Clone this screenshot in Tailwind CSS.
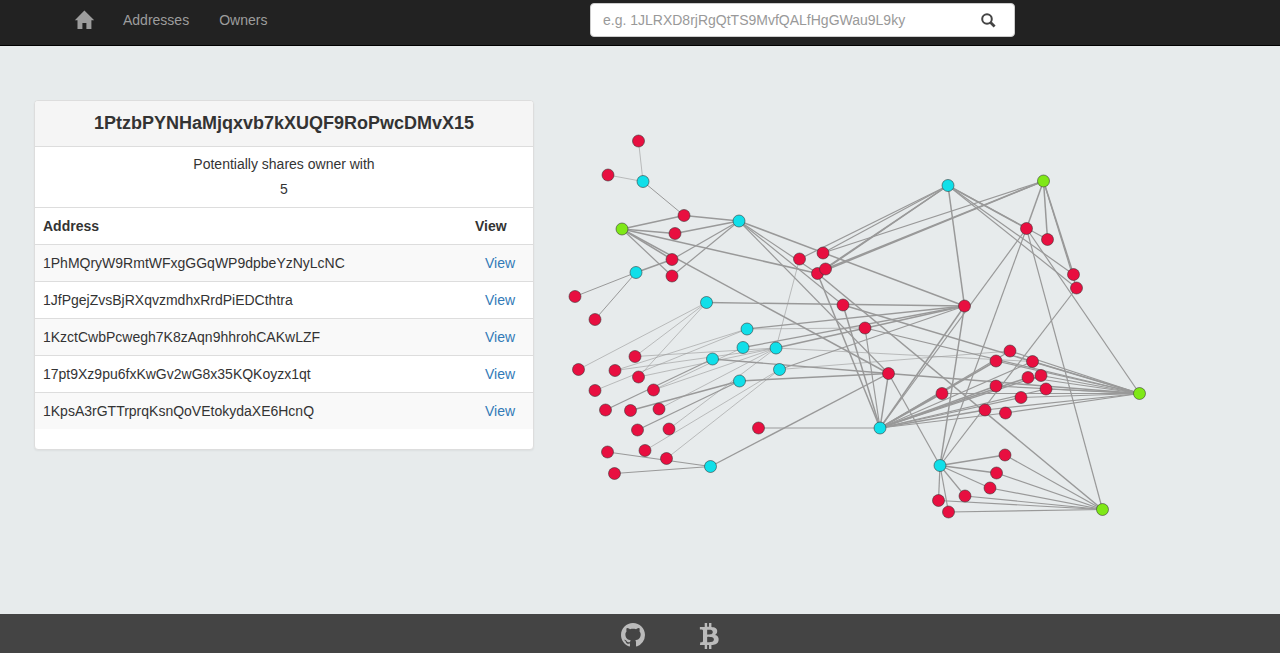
<!DOCTYPE html>
<html lang="en">
<head>
  <meta charset="UTF-8">
  <meta name="viewport" content="width=device-width, initial-scale=1">
  <title>Address overview</title>
  <script src="https://cdn.jsdelivr.net/npm/@tailwindcss/browser@4"></script>
</head>
<body class="min-h-screen flex flex-col bg-[#e7ebec] font-['Liberation_Sans',sans-serif] text-[14px] leading-[20px] text-[#333]">

  <!-- Navbar -->
  <nav class="flex bg-[#222] border-b border-black">
    <div class="w-[590px] shrink-0 flex items-start pl-[60px] h-[45px] text-[#9d9d9d]">
      <a href="#" aria-label="Home" class="px-[14px] py-[10px]">
        <svg class="w-[20px] h-[20px]" viewBox="0 0 20 20" fill="currentColor">
          <path d="M10.4 .6 L20.2 10.3 L17.4 10.3 L17.4 19 L12.4 19 L12.4 13 L8.4 13 L8.4 19 L3.5 19 L3.5 10.3 L.8 10.3 Z"/>
        </svg>
      </a>
      <a href="#" class="px-[15px] py-[10px]">Addresses</a>
      <a href="#" class="px-[15px] py-[10px]">Owners</a>
    </div>
    <form class="w-[425px] h-[34px] mt-[3px] flex items-center bg-white border border-[#ccc] rounded-[4px]">
      <input type="text" aria-label="Search address" placeholder="e.g. 1JLRXD8rjRgQtTS9MvfQALfHgGWau9L9ky" class="flex-1 min-w-0 h-full px-[12px] outline-none placeholder:text-[#999]">
      <button type="button" aria-label="Search" class="h-full px-[18px] text-[#444]">
        <svg class="w-[15px] h-[15px]" viewBox="0 0 15 15" fill="none" stroke="currentColor">
          <circle cx="6" cy="6" r="4.8" stroke-width="2"/>
          <path d="M9.6 9.6 L13.6 13.6" stroke-width="2.8"/>
        </svg>
      </button>
    </form>
  </nav>

  <main class="flex-1 flex items-start pt-[54px] pl-[34px] gap-[16px]">

    <!-- Address panel -->
    <section class="w-[500px] shrink-0 bg-white border border-[#ddd] rounded-[4px] shadow-xs overflow-hidden">
      <h1 class="h-[46px] bg-[#f5f5f5] border-b border-[#ddd] text-center text-[18px] leading-[44px] font-bold">1PtzbPYNHaMjqxvb7kXUQF9RoPwcDMvX15</h1>
      <div class="h-[60px] pt-[7px] text-center">
        <p>Potentially shares owner with</p>
        <p class="mt-[5px]">5</p>
      </div>
      <table class="w-full mb-[20px]">
        <thead>
          <tr class="border-t border-[#ddd]"><th class="p-[8px] text-left">Address</th><th class="w-[66px] p-[8px] text-left">View</th></tr>
        </thead>
        <tbody>
          <tr class="border-t border-[#ddd] bg-[#f9f9f9]"><td class="p-[8px]">1PhMQryW9RmtWFxgGGqWP9dpbeYzNyLcNC</td><td class="p-[8px] text-center"><a href="#" class="text-[#337ab7]">View</a></td></tr>
          <tr class="border-t border-[#ddd]"><td class="p-[8px]">1JfPgejZvsBjRXqvzmdhxRrdPiEDCthtra</td><td class="p-[8px] text-center"><a href="#" class="text-[#337ab7]">View</a></td></tr>
          <tr class="border-t border-[#ddd] bg-[#f9f9f9]"><td class="p-[8px]">1KzctCwbPcwegh7K8zAqn9hhrohCAKwLZF</td><td class="p-[8px] text-center"><a href="#" class="text-[#337ab7]">View</a></td></tr>
          <tr class="border-t border-[#ddd]"><td class="p-[8px]">17pt9Xz9pu6fxKwGv2wG8x35KQKoyzx1qt</td><td class="p-[8px] text-center"><a href="#" class="text-[#337ab7]">View</a></td></tr>
          <tr class="border-t border-[#ddd] bg-[#f9f9f9]"><td class="p-[8px]">1KpsA3rGTTrprqKsnQoVEtokydaXE6HcnQ</td><td class="p-[8px] text-center"><a href="#" class="text-[#337ab7]">View</a></td></tr>
        </tbody>
      </table>
    </section>

    <!-- Transaction graph -->
    <svg id="graph" class="flex-1 min-w-0" viewBox="550 100 730 450" role="img" aria-label="Transaction graph">
      <g id="links" stroke="#999"></g>
      <g id="nodes" stroke="#333" stroke-opacity="0.8" stroke-width="0.7"></g>
    </svg>
  </main>

  <!-- Footer -->
  <footer class="h-[39px] flex justify-center gap-[54px] pl-[60px] pt-[9px] bg-[#444] text-[#bbb]">
    <a href="#" aria-label="GitHub">
      <svg class="w-[24px] h-[24px]" viewBox="0 0 16 16" fill="currentColor">
        <path d="M8 0C3.58 0 0 3.58 0 8c0 3.54 2.29 6.53 5.47 7.59.4.07.55-.17.55-.38 0-.19-.01-.82-.01-1.49-2.01.37-2.53-.49-2.69-.94-.09-.23-.48-.94-.82-1.13-.28-.15-.68-.52-.01-.53.63-.01 1.08.58 1.23.82.72 1.21 1.87.87 2.33.66.07-.52.28-.87.51-1.07-1.78-.2-3.64-.89-3.64-3.95 0-.87.31-1.59.82-2.15-.08-.2-.36-1.02.08-2.12 0 0 .67-.21 2.2.82.64-.18 1.32-.27 2-.27.68 0 1.36.09 2 .27 1.53-1.04 2.2-.82 2.2-.82.44 1.1.16 1.92.08 2.12.51.56.82 1.27.82 2.15 0 3.07-1.87 3.75-3.65 3.95.29.25.54.73.54 1.48 0 1.07-.01 1.93-.01 2.2 0 .21.15.46.55.38A8.01 8.01 0 0 0 16 8c0-4.42-3.58-8-8-8z"/>
      </svg>
    </a>
    <a href="#" aria-label="Bitcoin">
      <svg class="w-[20px] h-[26px]" viewBox="0 128 1280 1664" fill="currentColor">
        <path d="M1167 640q18 182-131 258 117 28 175 103t45 214q-7 71-32.5 125t-64.5 89-97 58.5-121.5 34.5-145.5 15v255h-154v-251q-80 0-122-1v252h-154v-255q-18 0-54-.5t-55-.5h-200l31-183h111q50 0 58-51v-402h16q-6-1-16-1v-287q-13-68-89-68h-111v-164l212 1q64 0 97-1v-252h154v247q82-2 122-2v-245h154v252q79 7 140 22.5t113 45 82.5 78 36.5 114.5zm-215 545q0-36-15-64t-37-46-57.5-30.5-65.5-18.5-74-9-69-3-64.5 1-47.5 1v338q8 0 37 .5t48 .5 53-1.5 58.5-4 57-8.5 55.5-14 47.5-21 39.5-30 24.5-40 9.5-51zm-71-476q0-33-12.5-58.5t-30.5-42-48-28-55-16.5-61.5-8-58-2.5-54 1-39.5.5v307q5 0 34.5.5t46.5 0 50-2 55-5.5 51.5-11 48.5-18.5 37-27 27-38.5 9-51z"/>
      </svg>
    </a>
  </footer>

  <script>
    const colors = { r: "#e80f40", c: "#10dfe9", g: "#7fe817" };

    // id: [type, x, y]
    const nodes = {
      a: ["r", 638.5, 141], b: ["r", 608, 175], c: ["r", 684, 215.5], d: ["r", 675, 233.5],
      e: ["r", 672, 259.5], f: ["r", 672, 276], g: ["r", 575, 296.5], h: ["r", 595, 319.5],
      i: ["r", 635, 356.5], j: ["r", 615, 370.5], k: ["r", 638.5, 377], l: ["r", 578.5, 369.5],
      m: ["r", 595, 390.5], n: ["r", 653.5, 390], o: ["r", 605.5, 410], p: ["r", 630.5, 410.5],
      q: ["r", 659, 409], r: ["r", 637.5, 430], s: ["r", 669, 429], t: ["r", 645, 450.5],
      u: ["r", 607.5, 452], v: ["r", 666.5, 458.5], w: ["r", 614.5, 473.5], x: ["r", 758.5, 428],
      M1: ["r", 799.5, 259], M2: ["r", 823, 253], M3: ["r", 817.5, 273.5], M4: ["r", 825.5, 269],
      M5: ["r", 843, 305], M6: ["r", 865, 328], M7: ["r", 888.5, 373.5], M8: ["r", 964.5, 306],
      R1: ["r", 1026.5, 228.5], R2: ["r", 1047.5, 239.5], R3: ["r", 1073.5, 274.5], R4: ["r", 1076.5, 288],
      S1: ["r", 1010, 351], S2: ["r", 996, 361], S3: ["r", 1032.5, 361.5], S4: ["r", 1028, 377.5],
      S5: ["r", 1041, 375.5], S6: ["r", 996, 386], S7: ["r", 1046, 389], S8: ["r", 1021, 397.5],
      S9: ["r", 985, 410], S10: ["r", 1005.5, 413], S11: ["r", 942, 393.5],
      T1: ["r", 1005, 455], T2: ["r", 996.5, 473], T3: ["r", 990, 488],
      T4: ["r", 965, 496], T5: ["r", 938.5, 500.5], T6: ["r", 948.5, 512],
      A: ["c", 643, 181.5], B: ["c", 739, 221], C: ["c", 636, 272.5], D: ["c", 706.5, 302.5],
      E: ["c", 747, 329], F: ["c", 743, 347.5], H: ["c", 776, 348], I: ["c", 712.5, 359],
      J: ["c", 779.5, 369.5], K: ["c", 739.5, 381], L: ["c", 710.5, 466.5], N: ["c", 948, 185.5],
      O: ["c", 880, 428], P: ["c", 940, 465.5],
      G1: ["g", 622, 229], G2: ["g", 1043.5, 181], G3: ["g", 1139.5, 393.5], G4: ["g", 1102.5, 509.5]
    };

    // [stroke width, source, targets]
    const links = [
      [0.6, "A", "a b"], [1, "A", "c"],
      [1.5, "G1", "c d e M3 M7"], [1.2, "G1", "f"],
      [1.5, "B", "c d M8"], [1.2, "B", "e f M3 M5 M7"],
      [1.4, "C", "e"], [1, "C", "g h"],
      [0.6, "D", "l i k"], [1.3, "D", "M8"],
      [0.6, "E", "j m M6"], [1.3, "E", "M8"],
      [0.6, "F", "n"], [1.3, "F", "M8"],
      [0.6, "H", "i j k n q s M1 S3"], [1.5, "H", "M8"],
      [1.2, "I", "o"], [1.4, "I", "M7"],
      [0.6, "J", "t v S1"], [1.2, "J", "M8"],
      [1.3, "K", "p r"], [1.5, "K", "M7"],
      [1.2, "L", "u w"], [1.4, "L", "M7"],
      [1.5, "N", "M3 M4 M8 R1"], [1.2, "N", "M1 M2 R2 R3 R4"],
      [1.5, "G2", "M3 M4 R1 R2 R3"], [1.2, "G2", "M2 R4"],
      [1.5, "O", "M3 M5 M7 M8 S11 S2 S4 S6 S9"], [1.2, "O", "x M6 R1 S1 S3 S5 S7 S8 S10"],
      [1.5, "P", "M8 T1 T2"], [1.2, "P", "M7 R1 R4 T3 T4 T5 T6"],
      [1.5, "G3", "M5 M7"], [1.2, "G3", "M6 R1 S1 S2 S3 S4 S5 S6 S7 S8 S9 S10 S11"],
      [1.5, "G4", "M3"], [1.2, "G4", "R1 T1 T2 T3 T4 T5 T6"]
    ];

    const ns = "http://www.w3.org/2000/svg";
    function add(parent, tag, attrs) {
      const el = document.createElementNS(ns, tag);
      for (const key in attrs) el.setAttribute(key, attrs[key]);
      document.getElementById(parent).appendChild(el);
    }

    links.forEach(([width, source, targets]) => {
      const [, x1, y1] = nodes[source];
      targets.split(" ").forEach((id) => {
        const [, x2, y2] = nodes[id];
        add("links", "line", { x1, y1, x2, y2, "stroke-width": width });
      });
    });
    Object.values(nodes).forEach(([type, cx, cy]) => {
      add("nodes", "circle", { cx, cy, r: 6, fill: colors[type] });
    });
  </script>
</body>
</html>
